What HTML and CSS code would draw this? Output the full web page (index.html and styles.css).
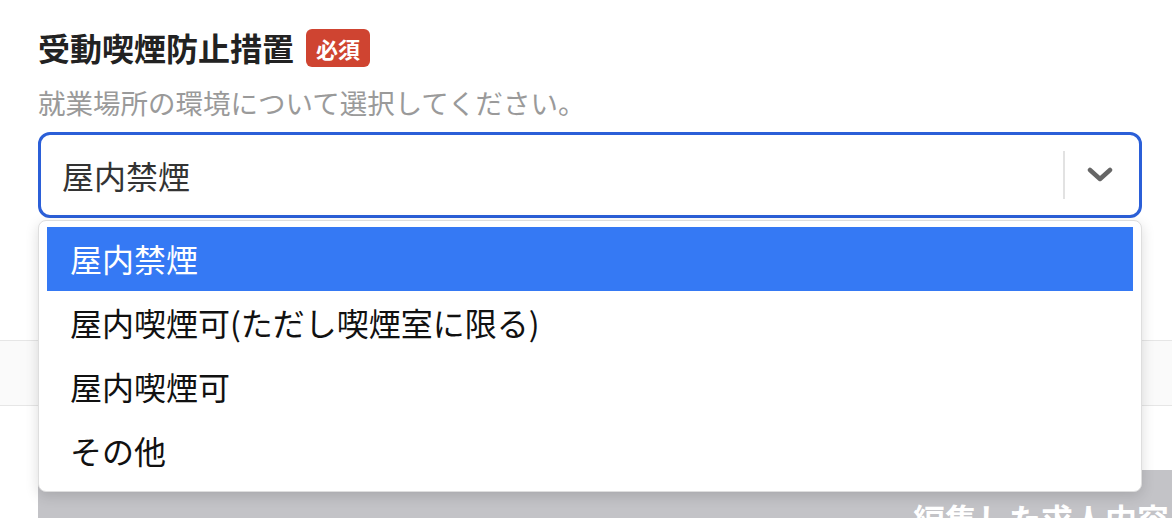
FILE: index.html
```html
<!DOCTYPE html>
<html lang="ja">
<head>
    <meta charset="UTF-8">
    <meta name="viewport" content="width=device-width, initial-scale=1.0">
    <title>受動喫煙防止措置</title>
    <link rel="stylesheet" href="styles.css">
</head>
<body>
    <div class="field">
        <div class="field-label">
            <span class="field-title">受動喫煙防止措置</span>
            <span class="badge">必須</span>
        </div>
        <p class="field-help">就業場所の環境について選択してください。</p>

        <div class="select-wrap">
            <div class="select-control">
                <span class="select-value">屋内禁煙</span>
                <span class="select-sep"></span>
                <svg class="select-arrow" width="26" height="16" viewBox="0 0 26 16">
                    <path d="M3 3 L13 12 L23 3" fill="none" stroke="#666" stroke-width="4.5" stroke-linecap="round" stroke-linejoin="round"/>
                </svg>
            </div>
            <ul class="select-menu">
                <li class="option selected">屋内禁煙</li>
                <li class="option">屋内喫煙可(ただし喫煙室に限る)</li>
                <li class="option">屋内喫煙可</li>
                <li class="option">その他</li>
            </ul>
        </div>
    </div>

    <div class="section-band"></div>

    <div class="save-bar">編集した求人内容を保存する</div>
</body>
</html>
```

FILE: styles.css
```css
body { margin: 0; background: #fff; font-family: "Noto Sans CJK JP", "Noto Sans", sans-serif; color: #222; overflow: hidden; height: 518px; }

.field { padding: 23px 30px 0 38px; }
.field-label { display: flex; align-items: center; gap: 12px; }
.field-title { font-size: 32px; line-height: 48px; font-weight: bold; color: #222; }
.badge { background: #cf4431; color: #fff; font-size: 22px; font-weight: bold; line-height: 38px; padding: 0 10px; border-radius: 6px; margin-top: 2px; }
.field-help { margin: 11px 0 0; font-size: 27.5px; line-height: 40px; color: #9a9a9a; }

.select-wrap { position: relative; margin-top: 10px; }
.select-control { display: flex; align-items: center; height: 80px; border: 3px solid #2b5fd8; border-radius: 12px; background: #fff; }
.select-value { flex: 1; padding-left: 21px; font-size: 32px; color: #333; }
.select-sep { width: 2px; height: 48px; background: #e2e2e2; }
.select-arrow { margin: 0 26px 0 22px; }

.select-menu { position: absolute; top: 88px; left: 0; right: 0; z-index: 2; margin: 0; padding: 6px 8px 8px; list-style: none; background: #fff; border: 1px solid #dedede; border-radius: 8px; box-shadow: 0 4px 14px rgba(0, 0, 0, 0.14); }
.option { height: 64px; line-height: 62px; padding-left: 23px; font-size: 32px; color: #111; }
.option.selected { background: #3579f4; color: #fff; }

.section-band { margin-top: 122px; height: 64px; background: #fafafa; border-top: 1px solid #e6e6e6; border-bottom: 1px solid #e6e6e6; }

.save-bar { margin: 64px 0 0 38px; width: 1600px; height: 80px; padding-left: 875px; box-sizing: border-box; background: #c3c3c7; color: #fff; font-size: 32px; font-weight: bold; line-height: 96px; white-space: nowrap; }
```
